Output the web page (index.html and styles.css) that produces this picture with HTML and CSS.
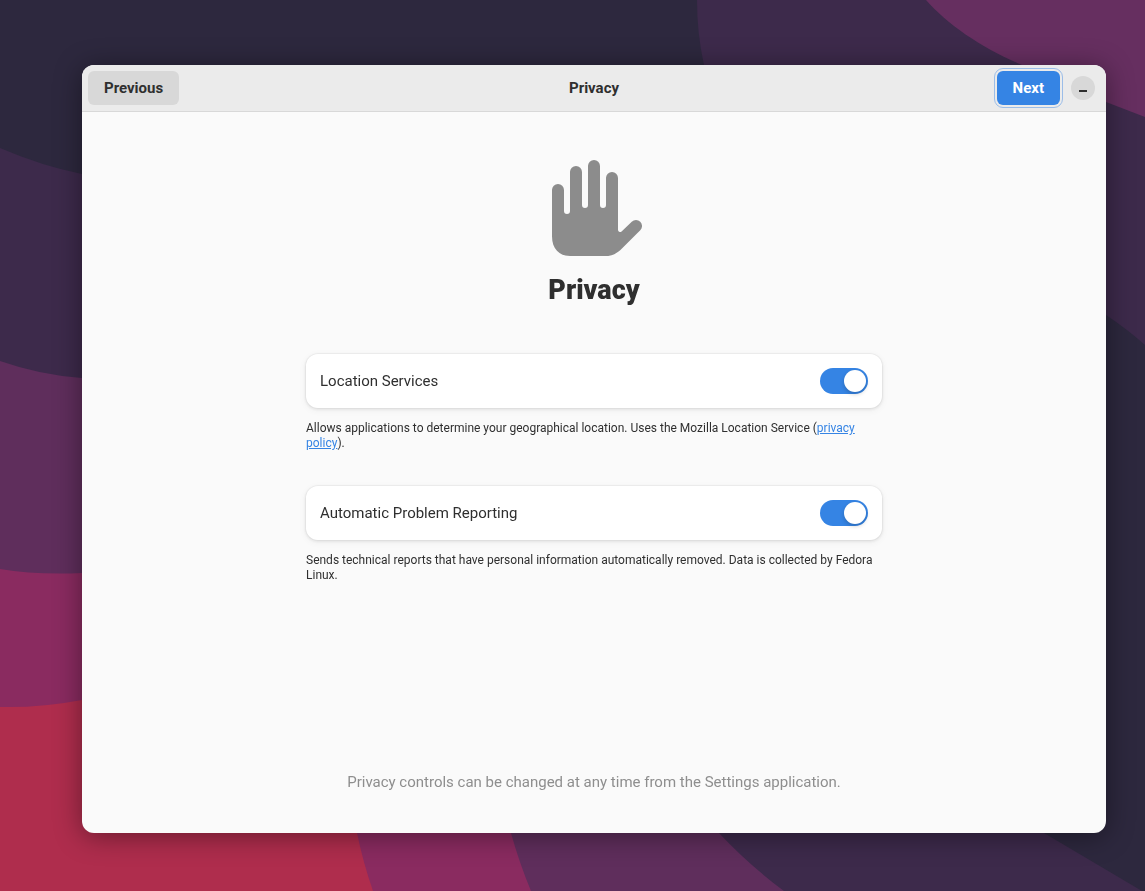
FILE: index.html
```
<!DOCTYPE html>
<html lang="en">

<head>
    <meta charset="UTF-8">
    <meta name="viewport" content="width=device-width, initial-scale=1.0">
    <title>Privacy</title>
    <link rel="stylesheet" href="styles.css">
</head>

<body>

    <!-- Desktop wallpaper -->
    <svg class="wallpaper" viewBox="0 0 1145 891" preserveAspectRatio="none" aria-hidden="true">
        <path fill="#3d2a4b" d="M697 0Q697 34 704 65L760 240L1106 315Q1127 329 1145 345V0z" />
        <path fill="#662f60" d="M926 0C948 25 982 48 1022 65Q1060 83 1106 102L1145 117V0z" />
        <path fill="#3d2a4b" d="M0 148Q42 166 82 174L500 400L1044 833L1142 891H0z" />
        <path fill="#5f2e5c" d="M0 361Q40 375 82 378L480 560L719 833Q749 865 784 891H0z" />
        <path fill="#8a2b60" d="M0 569Q36 575 82 573L400 640L511 833Q519 862 531 891H0z" />
        <path fill="#af2d4d" d="M0 707Q40 708 82 700L300 720L357 833Q363 862 373 891H0z" />
    </svg>

    <div class="window">

        <header class="header-bar">
            <div class="header-start">
                <button type="button" class="btn">Previous</button>
            </div>
            <div class="window-title">Privacy</div>
            <div class="header-end">
                <button type="button" class="btn btn-suggested">Next</button>
                <button type="button" class="btn-minimize" aria-label="Minimize">
                    <svg viewBox="0 0 16 16" width="16" height="16">
                        <path fill="#2e2e2e" d="M4 10h8v2H4z" />
                    </svg>
                </button>
            </div>
        </header>

        <main class="page">
            <svg class="page-icon" viewBox="0 0 16 16" aria-hidden="true">
                <path d="M1 5a1 1 0 0 1 2 0v3.5a.5.5 0 0 0 1 0V2a1 1 0 0 1 2 0v5.5a.5.5 0 0 0 1 0V1a1 1 0 0 1 2 0v6.5a.5.5 0 0 0 1 0V3a1 1 0 0 1 2 0V11.6C12 12 12.3 12.1 12.6 11.9L14.29 10.29A1 1 0 0 1 15.71 11.71L12.7 14.7C11.8 15.6 11 16 10 16H4C2.2 16 1 14.8 1 12.7z" />
            </svg>
            <h1>Privacy</h1>

            <section class="group">
                <div class="row">
                    <label for="location">Location Services</label>
                    <input type="checkbox" class="switch" id="location" checked>
                </div>
                <p class="caption">Allows applications to determine your geographical location. Uses the Mozilla Location Service (<a href="#">privacy policy</a>).</p>
            </section>

            <section class="group">
                <div class="row">
                    <label for="reporting">Automatic Problem Reporting</label>
                    <input type="checkbox" class="switch" id="reporting" checked>
                </div>
                <p class="caption">Sends technical reports that have personal information automatically removed. Data is collected by Fedora Linux.</p>
            </section>

            <p class="footer-note">Privacy controls can be changed at any time from the Settings application.</p>
        </main>

    </div>

</body>

</html>
```

FILE: styles.css
```
* {
    box-sizing: border-box;
}

body {
    display: flex;
    min-height: 100vh;
    margin: 0;
    padding: 65px 39px 58px 82px;
    background-color: #2d283e;
    color: #2f2f2f;
    font-family: Roboto, sans-serif;
    font-size: 15px;
    line-height: 20px;
}

.wallpaper {
    position: fixed;
    inset: 0;
    z-index: -1;
    width: 100%;
    height: 100%;
}

.window {
    display: flex;
    flex: 1;
    flex-direction: column;
    overflow: hidden;
    background-color: #fafafa;
    border-radius: 12px;
    box-shadow: 0 3px 28px rgba(0, 0, 0, 0.42);
}

/* Header bar */
.header-bar {
    display: grid;
    grid-template-columns: 1fr auto 1fr;
    align-items: center;
    padding: 6px;
    background-color: #ebebeb;
    border-bottom: 1px solid #d8d8d8;
}

.window-title {
    font-weight: 700;
}

.header-end {
    display: flex;
    align-items: center;
    justify-content: flex-end;
    gap: 11px;
    padding-right: 5px;
}

button {
    border: none;
    color: inherit;
    font: inherit;
    cursor: pointer;
}

.btn {
    height: 34px;
    padding: 0 16px;
    background-color: #d8d8d8;
    border-radius: 6px;
    font-weight: 700;
}

.btn-suggested {
    background-color: #3584e4;
    color: #fff;
    outline: 1px solid #9bbde8;
    outline-offset: 2px;
}

.btn-minimize {
    display: flex;
    align-items: center;
    justify-content: center;
    width: 24px;
    height: 24px;
    padding: 0;
    background-color: #d8d8d8;
    border-radius: 50%;
}

/* Page content */
.page {
    display: flex;
    flex: 1;
    flex-direction: column;
    align-items: center;
    padding: 48px 24px 41px;
}

.page-icon {
    width: 96px;
    height: 96px;
    fill: #8c8c8c;
}

h1 {
    margin: 18px 0 48px;
    font-size: 27px;
    font-weight: 900;
    line-height: 32px;
}

.group {
    width: 100%;
    max-width: 576px;
    margin-bottom: 35px;
}

.row {
    display: flex;
    align-items: center;
    justify-content: space-between;
    padding: 14px;
    background-color: #fff;
    border-radius: 12px;
    box-shadow: 0 0 0 1px rgba(0, 0, 0, 0.03), 0 1px 3px 1px rgba(0, 0, 0, 0.07), 0 2px 6px 2px rgba(0, 0, 0, 0.03);
}

.switch {
    display: flex;
    justify-content: flex-end;
    width: 48px;
    height: 26px;
    margin: 0;
    padding: 2px;
    appearance: none;
    background-color: #c8c8c8;
    border-radius: 13px;
    cursor: pointer;
}

.switch::before {
    content: "";
    width: 22px;
    height: 22px;
    background-color: #fff;
    border-radius: 50%;
    box-shadow: 0 2px 4px rgba(0, 0, 0, 0.2);
}

.switch:checked {
    background-color: #3584e4;
}

.switch:not(:checked) {
    justify-content: flex-start;
}

.caption {
    margin: 13px 0 0;
    font-size: 12px;
    line-height: 15px;
}

.caption a {
    color: #3584e4;
}

.footer-note {
    margin: auto 0 0;
    color: #8e8e8e;
    text-align: center;
}
```
